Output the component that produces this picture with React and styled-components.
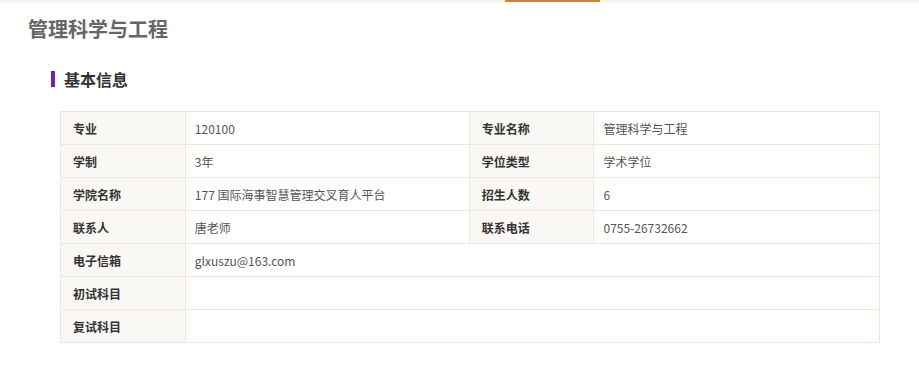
import React from 'react'
import styled, { createGlobalStyle } from 'styled-components'

const GlobalStyle = createGlobalStyle`
body{
  margin:0;
  background:#fff;
  font-family:"Noto Sans CJK SC","Microsoft YaHei",sans-serif;
}
`

const TopBar = styled.div`
height:3px;
background:#f8f4f0;
display:flex;
`
const ActiveLine = styled.div`
margin-left:505px;
width:95px;
height:2px;
background:#c88531;
`
const Page = styled.div`
padding:0 39px 0 28px;
`
const Title = styled.h1`
margin:12px 0 0;
font-size:20px;
line-height:28px;
font-weight:700;
color:#666;
`
const SectionHead = styled.h2`
display:flex;
align-items:center;
gap:9px;
margin:28px 0 0 23px;
font-size:16px;
line-height:16px;
font-weight:700;
color:#333;
&::before{
  content:'';
  width:4px;
  height:16px;
  background:#7b1fa2;
}
`
const Table = styled.table`
margin:24px 0 0 32px;
width:820px;
border-collapse:collapse;
border:1px solid #f2e6da;
font-size:12px;
`
const Cell = styled.td`
height:32px;
padding:0 ${({ label }) => (label ? '12px' : '9px')};
border:1px solid #f2e6da;
background:${({ label }) => (label ? '#faf8f5' : '#fff')};
color:${({ label }) => (label ? '#333' : '#555')};
font-weight:${({ label }) => (label ? 700 : 400)};
white-space:nowrap;
`

const pairs = [
  ['专业', '120100', '专业名称', '管理科学与工程'],
  ['学制', '3年', '学位类型', '学术学位'],
  ['学院名称', '177 国际海事智慧管理交叉育人平台', '招生人数', '6'],
  ['联系人', '唐老师', '联系电话', '0755-26732662'],
]
const singles = [
  ['电子信箱', 'glxuszu@163.com'],
  ['初试科目', ''],
  ['复试科目', ''],
]

export default function App() {
  return (
    <>
      <GlobalStyle />
      <TopBar>
        <ActiveLine />
      </TopBar>
      <Page>
        <Title>管理科学与工程</Title>
        <SectionHead>基本信息</SectionHead>
        <Table>
          <colgroup>
            <col style={{ width: 125 }} />
            <col style={{ width: 284 }} />
            <col style={{ width: 125 }} />
            <col style={{ width: 286 }} />
          </colgroup>
          <tbody>
            {pairs.map((row, i) => (
              <tr key={i}>
                <Cell label>{row[0]}</Cell>
                <Cell>{row[1]}</Cell>
                <Cell label>{row[2]}</Cell>
                <Cell>{row[3]}</Cell>
              </tr>
            ))}
            {singles.map((row, i) => (
              <tr key={'s' + i}>
                <Cell label>{row[0]}</Cell>
                <Cell colSpan={3}>{row[1]}</Cell>
              </tr>
            ))}
          </tbody>
        </Table>
      </Page>
    </>
  )
}
